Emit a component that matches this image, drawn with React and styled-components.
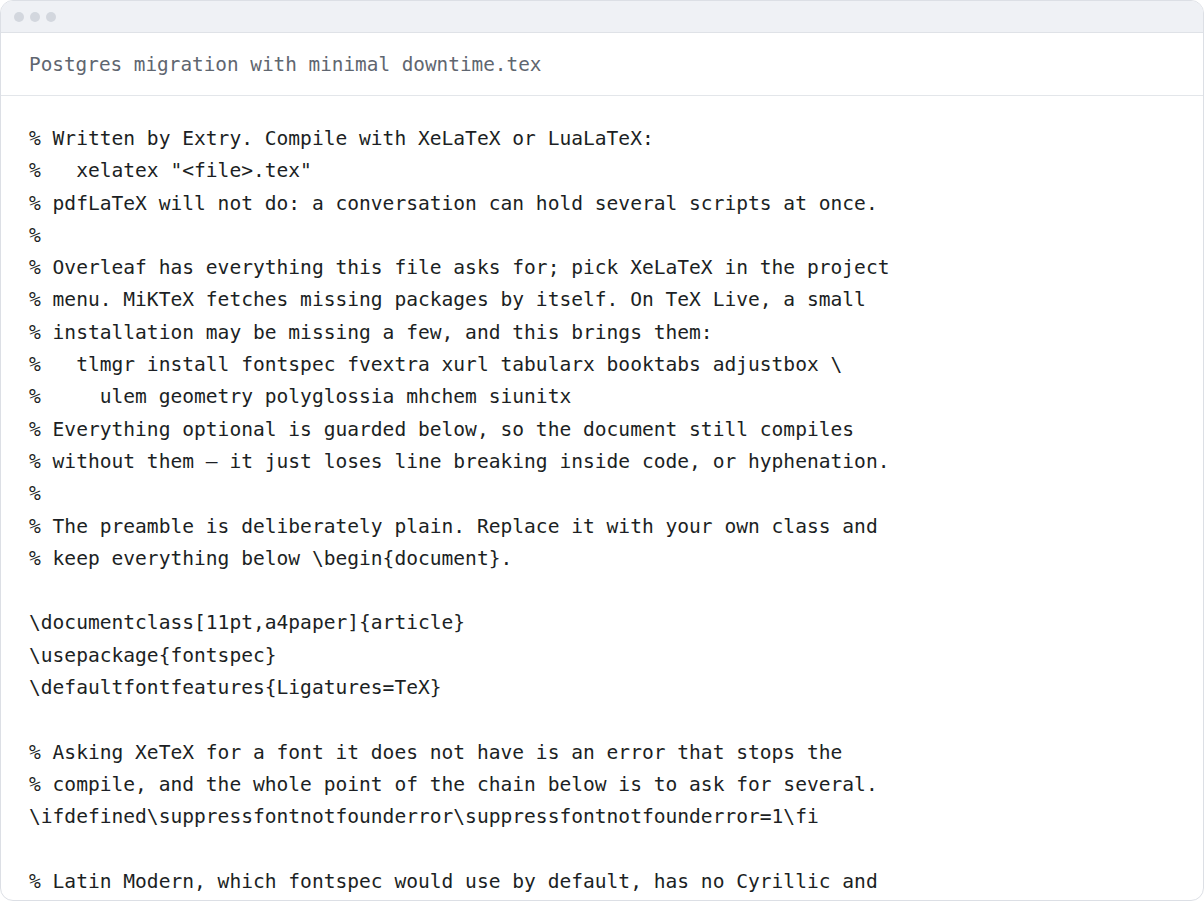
import React from 'react';
import styled, { createGlobalStyle } from 'styled-components';

const GlobalStyle = createGlobalStyle`
  html, body {
    margin: 0;
    padding: 0;
    background: #ffffff;
  }
  #root {
    height: 100vh;
  }
`;

const Window = styled.div`
  box-sizing: border-box;
  height: 100vh;
  display: flex;
  flex-direction: column;
  border: 1px solid #dcdfe5;
  border-radius: 13px;
  overflow: hidden;
  background: #ffffff;
`;

const TitleBar = styled.div`
  flex: 0 0 31px;
  display: flex;
  align-items: center;
  gap: 6px;
  padding-left: 13px;
  background: #eff1f5;
  border-bottom: 1px solid #dfe2e7;
`;

const Dot = styled.span`
  width: 10px;
  height: 10px;
  border-radius: 50%;
  background: #d3d7de;
`;

const FileHeader = styled.div`
  flex: 0 0 62px;
  display: flex;
  align-items: center;
  padding-left: 28px;
  border-bottom: 1px solid #e3e6ea;
  font-family: 'DejaVu Sans Mono', monospace;
  font-size: 19.35px;
  color: #5f6670;
`;

const Code = styled.pre`
  flex: 1;
  margin: 0;
  padding: 27px 28px 0;
  overflow: hidden;
  font-family: 'DejaVu Sans Mono', monospace;
  font-size: 19.58px;
  line-height: 32.3px;
  color: #1c1f24;
  white-space: pre;
`;

const source = [
  '% Written by Extry. Compile with XeLaTeX or LuaLaTeX:',
  '%   xelatex "<file>.tex"',
  '% pdfLaTeX will not do: a conversation can hold several scripts at once.',
  '%',
  '% Overleaf has everything this file asks for; pick XeLaTeX in the project',
  '% menu. MiKTeX fetches missing packages by itself. On TeX Live, a small',
  '% installation may be missing a few, and this brings them:',
  '%   tlmgr install fontspec fvextra xurl tabularx booktabs adjustbox \\',
  '%     ulem geometry polyglossia mhchem siunitx',
  '% Everything optional is guarded below, so the document still compiles',
  '% without them \u2014 it just loses line breaking inside code, or hyphenation.',
  '%',
  '% The preamble is deliberately plain. Replace it with your own class and',
  '% keep everything below \\begin{document}.',
  '',
  '\\documentclass[11pt,a4paper]{article}',
  '\\usepackage{fontspec}',
  '\\defaultfontfeatures{Ligatures=TeX}',
  '',
  '% Asking XeTeX for a font it does not have is an error that stops the',
  '% compile, and the whole point of the chain below is to ask for several.',
  '\\ifdefined\\suppressfontnotfounderror\\suppressfontnotfounderror=1\\fi',
  '',
  '% Latin Modern, which fontspec would use by default, has no Cyrillic and',
].join('\n');

const App = () => (
  <>
    <GlobalStyle />
    <Window>
      <TitleBar>
        <Dot />
        <Dot />
        <Dot />
      </TitleBar>
      <FileHeader>Postgres migration with minimal downtime.tex</FileHeader>
      <Code>{source}</Code>
    </Window>
  </>
);

export default App;
